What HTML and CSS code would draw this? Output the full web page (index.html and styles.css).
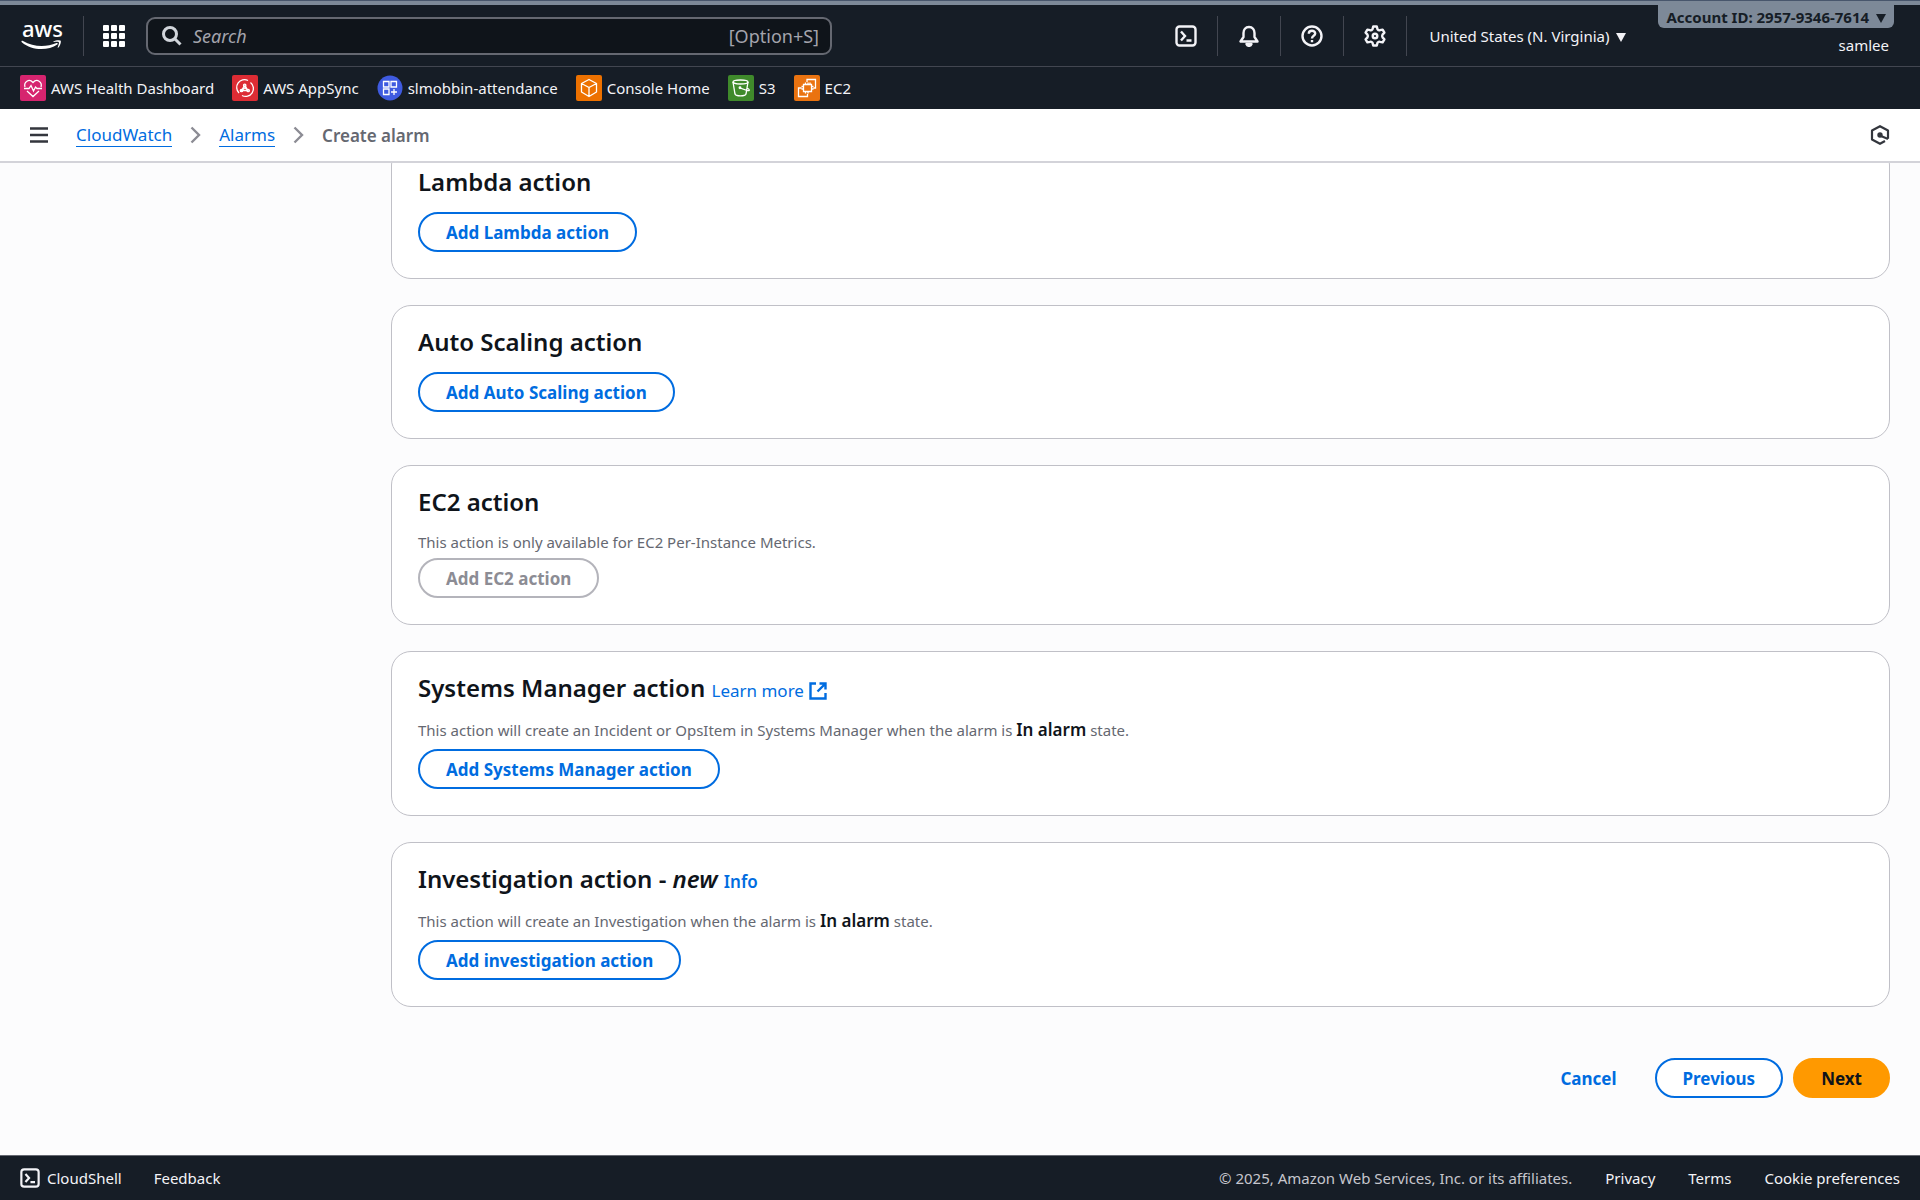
FILE: index.html
```html
<!DOCTYPE html>
<html lang="en">
<head>
    <meta charset="UTF-8">
    <meta name="viewport" content="width=device-width, initial-scale=1.0">
    <title>Create alarm | CloudWatch</title>
    <link rel="stylesheet" href="styles.css">
</head>
<body>
    <header class="topbar">
        <a class="logo" href="#" aria-label="AWS home">
            <span class="logo-text">aws</span>
            <svg width="40" height="11" viewBox="0 0 40 11" fill="#fff">
                <path d="M0.5 1.2C0.8 0.7 1.4 0.7 2 1.1C12.500 7.200 25 7.500 35.500 3.100C36.700 2.600 37.300 3.700 36.300 4.500C27 11 11 11 0.800 2.200C0.400 1.900 0.300 1.500 0.500 1.200Z"/>
                <path d="M32.500 1.500C34.500 0 39 -0.200 39.700 0.700C40.300 1.700 39.300 5.800 37.400 7.500C36.900 7.900 36.500 7.700 36.700 7.200C37.400 5.500 38.300 2.900 37.800 2.200C37.200 1.500 34.500 1.800 33 2C32.300 2.100 32 1.900 32.500 1.500Z"/>
            </svg>
        </a>
        <button class="apps" aria-label="Services">
            <svg width="22" height="22" viewBox="0 0 22 22" fill="#fff">
                <rect x="0" y="0" width="6" height="6" rx="1"/><rect x="8" y="0" width="6" height="6" rx="1"/><rect x="16" y="0" width="6" height="6" rx="1"/>
                <rect x="0" y="8" width="6" height="6" rx="1"/><rect x="8" y="8" width="6" height="6" rx="1"/><rect x="16" y="8" width="6" height="6" rx="1"/>
                <rect x="0" y="16" width="6" height="6" rx="1"/><rect x="8" y="16" width="6" height="6" rx="1"/><rect x="16" y="16" width="6" height="6" rx="1"/>
            </svg>
        </button>
        <label class="search">
            <svg width="20" height="20" viewBox="0 0 20 20" fill="none" stroke="#d1d5db" stroke-width="3">
                <circle cx="8" cy="8" r="6.500"/><path d="M12.500 12.500L18.500 18.500"/>
            </svg>
            <input type="text" placeholder="Search" aria-label="Search">
            <span>[Option+S]</span>
        </label>
        <nav class="tools">
            <button aria-label="CloudShell">
                <svg width="22" height="22" viewBox="0 0 22 22" fill="none" stroke="#f3f3f7" stroke-width="2.400"><rect x="1.500" y="1.500" width="19" height="19" rx="3"/><path d="M6 6.500L10 11L6 15.500M11.500 15.500H16.500"/></svg>
            </button>
            <button aria-label="Notifications">
                <svg width="22" height="22" viewBox="0 0 22 22" fill="none" stroke="#f3f3f7" stroke-width="2.400" stroke-linejoin="round"><path d="M11 2C7.500 2 5.500 4.500 5.500 8V12L2.500 16.500H19.500L16.500 12V8C16.500 4.500 14.500 2 11 2Z"/><path d="M8.500 19C9.500 21.500 12.500 21.500 13.500 19Z" fill="#f3f3f7"/></svg>
            </button>
            <button aria-label="Help">
                <svg width="22" height="22" viewBox="0 0 22 22" fill="none" stroke="#f3f3f7" stroke-width="2.400"><circle cx="11" cy="11" r="9.500"/><path d="M7.800 8.800C7.800 4.800 14.200 4.900 14.200 8.600C14.200 11 11 10.700 11 13.500M11 15V17.200"/></svg>
            </button>
            <button aria-label="Settings">
                <svg width="22" height="22" viewBox="0 0 22 22" fill="none" stroke="#f3f3f7" stroke-width="2.400" stroke-linejoin="round"><path d="M9.200 1.500H12.800L13.500 4.300Q14.600 5.800 16 5.200L18.600 4.600L20.400 7.700L18.500 9.700Q17.800 11 18.500 12.300L20.400 14.300L18.600 17.400L16 16.800Q14.600 16.200 13.500 17.700L12.800 20.500H9.200L8.500 17.700Q7.400 16.200 6 16.800L3.400 17.400L1.600 14.300L3.500 12.300Q4.200 11 3.500 9.700L1.600 7.700L3.400 4.600L6 5.200Q7.400 5.800 8.500 4.300Z"/><circle cx="11" cy="11" r="2.300"/></svg>
            </button>
        </nav>
        <button class="region">United States (N. Virginia) <i class="caret"></i></button>
        <div class="account">
            <button class="account-id">Account ID: 2957-9346-7614 <i class="caret"></i></button>
            <span class="user">samlee</span>
        </div>
    </header>

    <nav class="shortcuts">
        <a href="#">
            <svg width="26" height="26" viewBox="0 0 26 26" fill="none" stroke="#fff" stroke-width="1.300"><rect width="26" height="26" rx="2" fill="#d6246f" stroke="none"/><path d="M5 12C3.500 7 9 3 13 7.500C17 3 22.500 7 21 12M4 13.500H9L11 10.500L13.500 16L15.500 12L17 13.500H22M7 16L13 21.500L19 16"/></svg>
            AWS Health Dashboard
        </a>
        <a href="#">
            <svg width="26" height="26" viewBox="0 0 26 26" fill="none" stroke="#fff" stroke-width="1.300"><rect width="26" height="26" rx="2" fill="#dd2c34" stroke="none"/><path d="M7 18A7.800 7.800 0 0 1 16 5.500M18.500 7.500A7.800 7.800 0 0 1 10 20.500M12.500 10.500L9.500 15.500H16L13 10.500M13 13.500V11M12.800 13L10 15M13 13L16 15"/><circle cx="12.700" cy="10.300" r="1.200"/><circle cx="9.500" cy="15.500" r="1.200"/><circle cx="16.200" cy="15.500" r="1.200"/></svg>
            AWS AppSync
        </a>
        <a href="#">
            <svg width="26" height="26" viewBox="0 0 26 26" fill="none" stroke="#fff" stroke-width="1.300"><circle cx="13" cy="13" r="12.500" fill="#3f5be0" stroke="none"/><path d="M6.500 6.500H12V12H6.500ZM14 6.500H19.500V12H14ZM6.500 14H12V19.500H6.500ZM17 14V20M14 17H20"/></svg>
            slmobbin-attendance
        </a>
        <a href="#">
            <svg width="26" height="26" viewBox="0 0 26 26" fill="none" stroke="#fff" stroke-width="1.300" stroke-linejoin="round"><rect width="26" height="26" rx="2" fill="#ed7100" stroke="none"/><path d="M13 4.500L20.500 8.500V17L13 21.500L5.500 17V8.500ZM5.500 8.500L13 12.500L20.500 8.500M13 12.500V21.500"/></svg>
            Console Home
        </a>
        <a href="#">
            <svg width="26" height="26" viewBox="0 0 26 26" fill="none" stroke="#fff" stroke-width="1.300"><rect width="26" height="26" rx="2" fill="#3f8a2b" stroke="none"/><ellipse cx="12.500" cy="7" rx="7.500" ry="2"/><path d="M5 7L7 19C8 21.500 17 21.500 18 19L20 7M12 13L19.500 15.500C22 16 22 14.500 19 13"/><circle cx="12" cy="12.800" r=".8"/></svg>
            S3
        </a>
        <a href="#">
            <svg width="26" height="26" viewBox="0 0 26 26" fill="none" stroke="#fff" stroke-width="1.300"><rect width="26" height="26" rx="2" fill="#ea7310" stroke="none"/><path d="M9.500 9.500H17.500V16.500H9.500ZM11.500 7.500V9.500M14 7.500V9.500M16 7.500V9.500M11.500 16.500V18.500M14 16.500V18.500M7.500 11.500H9.500M7.500 14H9.500M17.500 11.500H19.500M17.500 14H19.500M13 7V4.500H21.500V13H19.500M7.500 13H4.500V21.500H13.500V19"/></svg>
            EC2
        </a>
    </nav>

    <div class="pathbar">
        <button class="menu" aria-label="Open navigation">
            <svg width="18" height="16" viewBox="0 0 18 16" stroke="#33363d" stroke-width="2.400"><path d="M0 1.500H18M0 8H18M0 14.500H18"/></svg>
        </button>
        <nav class="breadcrumbs">
            <a href="#">CloudWatch</a>
            <svg width="11" height="18" viewBox="0 0 11 18" fill="none" stroke="#8c8c94" stroke-width="2.400"><path d="M1.500 1.500L9 9L1.500 16.500"/></svg>
            <a href="#">Alarms</a>
            <svg width="11" height="18" viewBox="0 0 11 18" fill="none" stroke="#8c8c94" stroke-width="2.400"><path d="M1.500 1.500L9 9L1.500 16.500"/></svg>
            <span>Create alarm</span>
        </nav>
        <button class="assist" aria-label="Open assistant">
            <svg width="20" height="20" viewBox="0 0 20 20" fill="none" stroke="#33363d" stroke-width="2.200" stroke-linejoin="round"><path d="M15 16L10 18.800L2 14.500V5.500L10 1.200L18 5.500V13.800"/><path d="M11 11L18 14"/><circle cx="10" cy="10" r="1.600" fill="#33363d"/></svg>
        </button>
    </div>

    <main class="content">
        <section class="card">
            <h2>Lambda action</h2>
            <button class="btn">Add Lambda action</button>
        </section>
        <section class="card">
            <h2>Auto Scaling action</h2>
            <button class="btn">Add Auto Scaling action</button>
        </section>
        <section class="card">
            <h2>EC2 action</h2>
            <p>This action is only available for EC2 Per-Instance Metrics.</p>
            <button class="btn" disabled>Add EC2 action</button>
        </section>
        <section class="card">
            <h2>Systems Manager action
                <a href="#">Learn more
                    <svg width="18" height="18" viewBox="0 0 18 18" fill="none" stroke="#006ce0" stroke-width="2.400"><path d="M7 1.500H1.500V16.500H16.500V11M10.500 1.500H16.500V7.500M16 2L8.500 9.500"/></svg>
                </a>
            </h2>
            <p class="with-state">This action will create an Incident or OpsItem in Systems Manager when the alarm is <strong>In alarm</strong> state.</p>
            <button class="btn">Add Systems Manager action</button>
        </section>
        <section class="card">
            <h2>Investigation action - <em>new</em> <a class="info" href="#">Info</a></h2>
            <p class="with-state">This action will create an Investigation when the alarm is <strong>In alarm</strong> state.</p>
            <button class="btn">Add investigation action</button>
        </section>
        <div class="actions">
            <button class="btn btn-link">Cancel</button>
            <button class="btn">Previous</button>
            <button class="btn btn-primary">Next</button>
        </div>
    </main>

    <footer class="footer">
        <button>
            <svg width="20" height="20" viewBox="0 0 22 22" fill="none" stroke="#f3f3f7" stroke-width="2.400"><rect x="1.500" y="1.500" width="19" height="19" rx="3"/><path d="M6 6.500L10 11L6 15.500M11.500 15.500H16.500"/></svg>
            CloudShell
        </button>
        <a href="#">Feedback</a>
        <div class="legal">
            <span>© 2025, Amazon Web Services, Inc. or its affiliates.</span>
            <a href="#">Privacy</a>
            <a href="#">Terms</a>
            <a href="#">Cookie preferences</a>
        </div>
    </footer>
</body>
</html>
```
FILE: styles.css
```css
* {
    box-sizing: border-box;
}
body {
    margin: 0;
    height: 100vh;
    display: flex;
    flex-direction: column;
    font-family: "Noto Sans", "Open Sans", sans-serif;
    font-size: 15px;
    color: #0f141a;
    background-color: #fcfcfd;
    border-top: 1px solid #48566c;
}
a {
    color: #006ce0;
    text-decoration: none;
}
button {
    font: inherit;
    color: inherit;
    background: none;
    border: none;
    padding: 0;
    cursor: pointer;
}
svg {
    display: block;
    flex: none;
}

/* top bar */
.topbar {
    height: 66px;
    flex: none;
    display: flex;
    align-items: center;
    background-color: #161d26;
    border-top: 4px solid #7d8998;
    border-bottom: 1px solid #424650;
    color: #f3f3f7;
    padding-right: 26px;
}
.logo {
    width: 84px;
    height: 40px;
    padding-left: 21px;
    border-right: 1px solid #424650;
    color: #fff;
}
.logo-text {
    display: block;
    font-size: 22px;
    line-height: 24px;
    padding-left: 1px;
    font-weight: 500;
}
.apps {
    margin: 0 21px 0 19px;
}
.search {
    width: 686px;
    height: 38px;
    display: flex;
    align-items: center;
    gap: 11px;
    padding: 0 11px 0 14px;
    background-color: #0f141a;
    border: 2px solid #656871;
    border-radius: 9px;
    font-size: 18px;
    color: #a4a4ad;
}
.search input {
    flex: 1;
    min-width: 0;
    font: inherit;
    color: #fff;
    background: none;
    border: none;
    outline: none;
    padding: 0;
}
.search input::placeholder {
    color: #a4a4ad;
    font-style: italic;
}
.tools {
    display: flex;
    margin-left: auto;
}
.tools button {
    width: 63px;
    height: 40px;
    display: flex;
    align-items: center;
    justify-content: center;
    border-right: 1px solid #424650;
}
.region {
    width: 230px;
    padding-left: 22px;
    text-align: left;
    white-space: nowrap;
}
.caret {
    display: inline-block;
    border: 5px solid transparent;
    border-top: 9px solid currentColor;
    border-bottom: none;
    margin-left: 3px;
}
.account {
    align-self: flex-start;
    display: flex;
    flex-direction: column;
    align-items: flex-end;
    margin-left: 21px;
}
.account-id {
    height: 23px;
    padding: 0 8px;
    background-color: #7d8998;
    border-radius: 0 0 6px 6px;
    color: #161d26;
    font-weight: 700;
    white-space: nowrap;
}
.user {
    line-height: 24px;
    padding: 5px 5px 0 0;
}

/* favourites */
.shortcuts {
    height: 42px;
    flex: none;
    display: flex;
    align-items: center;
    gap: 18px;
    padding: 0 20px;
    background-color: #161d26;
}
.shortcuts a {
    display: flex;
    align-items: center;
    gap: 5px;
    color: #f3f3f7;
}

/* breadcrumbs */
.pathbar {
    height: 54px;
    flex: none;
    display: flex;
    align-items: center;
    padding: 0 30px;
    background-color: #fff;
    border-bottom: 2px solid #d3d3d9;
    font-size: 17px;
}
.breadcrumbs {
    display: flex;
    align-items: center;
    gap: 18px;
    margin-left: 28px;
}
.breadcrumbs a {
    line-height: 22px;
    border-bottom: 1px solid #006ce0;
}
.breadcrumbs span {
    color: #656871;
    font-weight: 600;
}
.assist {
    margin-left: auto;
}

/* the form is scrolled to its end */
.content {
    flex: 1;
    min-height: 0;
    overflow: hidden;
    display: flex;
    flex-direction: column;
    justify-content: flex-end;
    gap: 26px;
    padding: 0 30px 57px 391px;
}
.card {
    background-color: #fff;
    border: 1px solid #c0c0c7;
    border-radius: 20px;
    padding: 20px 26px 26px;
}
.card h2 {
    margin: 0 0 14px;
    font-size: 24px;
    line-height: 32px;
    font-weight: 600;
}
.card h2 a {
    display: inline-flex;
    align-items: center;
    gap: 5px;
    font-size: 17px;
    line-height: 20px;
    font-weight: 400;
}
.card h2 .info {
    font-weight: 600;
}
.card p {
    margin: 0 0 6px;
    line-height: 20px;
    color: #656871;
}
.card .with-state {
    line-height: 25px;
}
.card strong {
    font-size: 17px;
    line-height: 20px;
    font-weight: 600;
    color: #0f141a;
}
.btn {
    height: 40px;
    padding: 0 26px;
    border: 2px solid #006ce0;
    border-radius: 20px;
    background-color: #fff;
    color: #006ce0;
    font-size: 17px;
    font-weight: 700;
}
.btn:disabled {
    color: #8c8c94;
    border-color: #b4b4bb;
}
.actions {
    display: flex;
    justify-content: flex-end;
    gap: 10px;
    padding-top: 25px;
}
.btn-link {
    background: none;
    border-color: transparent;
}
.btn-primary {
    background-color: #ff9900;
    border-color: #ff9900;
    color: #0f141a;
}

/* footer */
.footer {
    height: 45px;
    flex: none;
    display: flex;
    align-items: center;
    gap: 32px;
    padding: 0 20px;
    background-color: #161d26;
    border-top: 1px solid #656871;
    color: #f3f3f7;
}
.footer a {
    color: #f3f3f7;
}
.footer button {
    display: flex;
    align-items: center;
    gap: 7px;
}
.legal {
    display: flex;
    gap: 33px;
    margin-left: auto;
}
.legal span {
    color: #c6c6cd;
}
```
